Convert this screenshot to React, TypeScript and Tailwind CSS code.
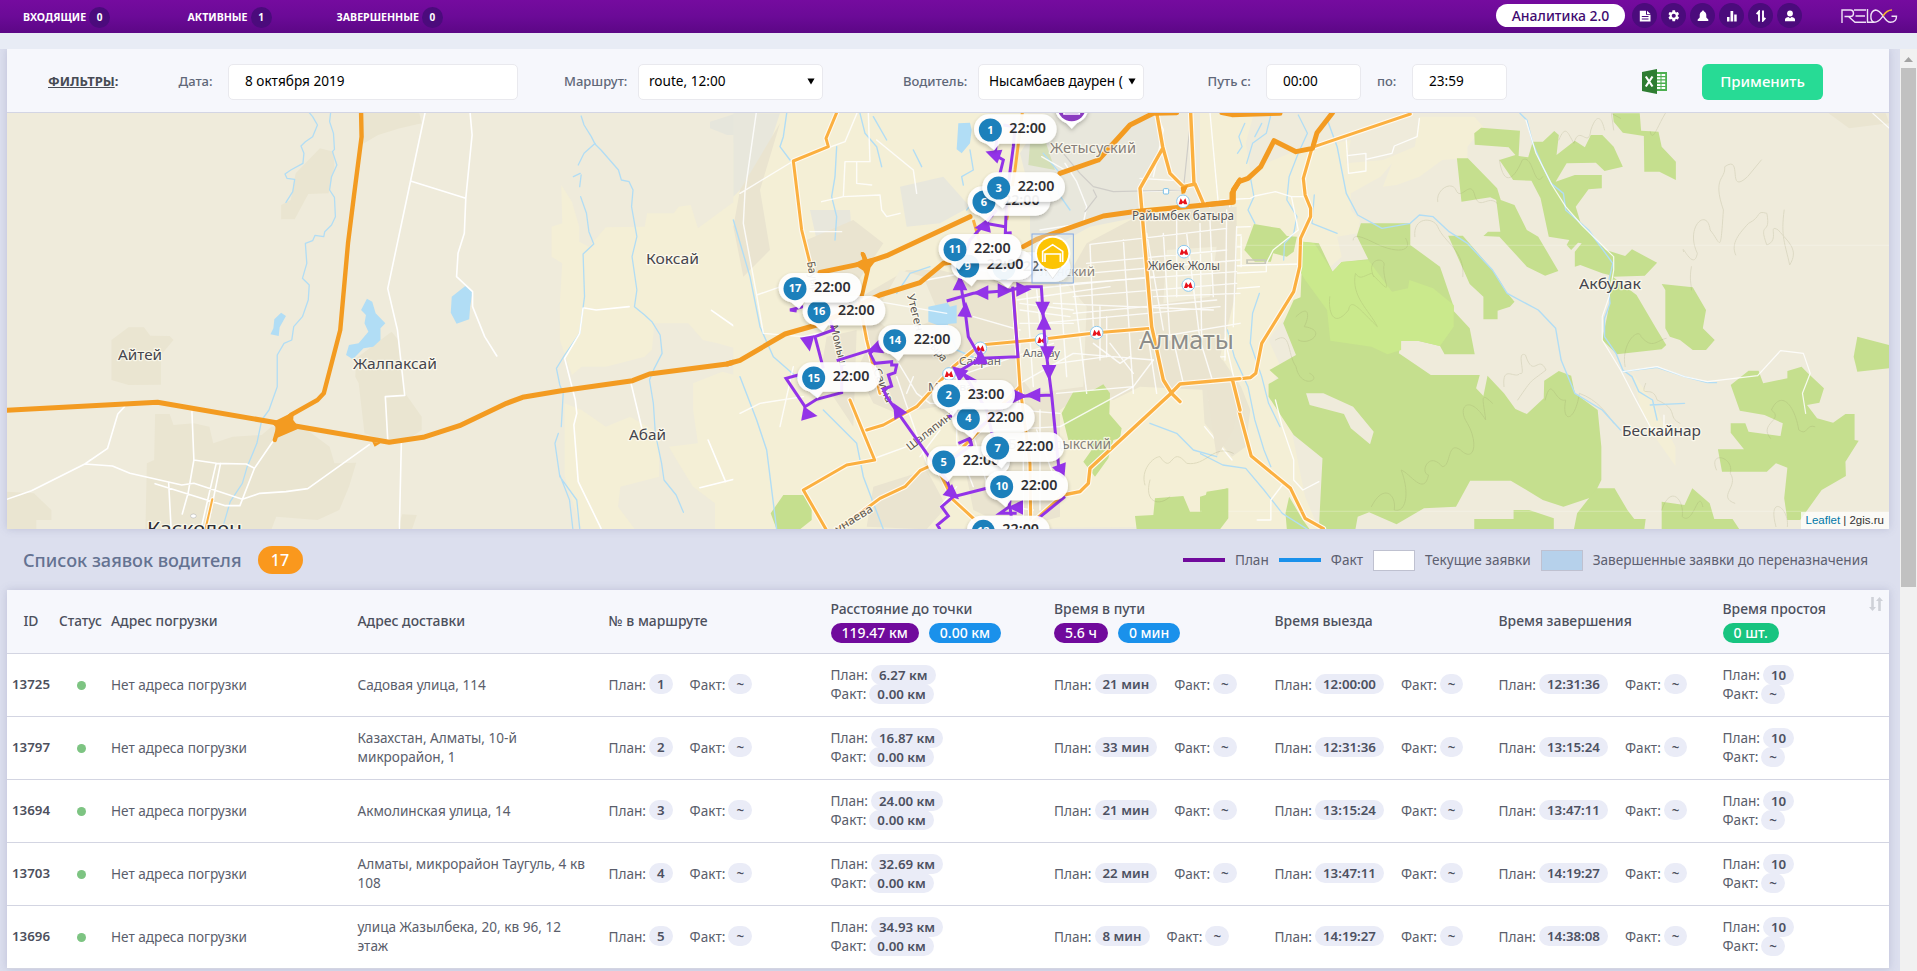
import React from 'react';
import { MdSettings } from 'react-icons/md';

const ORANGE = '#f39b21';
const ORANGE2 = '#fbb040';
const WATER = '#b1ddf5';
const GREEN = '#c5df8e';
const PURPLE = '#9333e8';

type LineProps = { d: string; w?: number; c?: string; o?: number };

/* Stroke whose width stays in screen pixels inside scaled groups. */
function Line({ d, w = 1, c = '#fff', o = 1 }: LineProps) {
  return (
    <path d={d} fill="none" stroke={c} strokeWidth={w} opacity={o} strokeLinejoin="round" strokeLinecap="round" vectorEffect="non-scaling-stroke" />
  );
}

function Road({ d, w = 2.4, c = ORANGE2 }: LineProps) {
  return (
    <>
      <Line d={d} w={w + 2.2} c="#fffaf0" />
      <Line d={d} w={w} c={c} />
    </>
  );
}

type LabelProps = { x: number; y: number; w?: number; size: number; color?: string; rotate?: number; children: string };

function Label({ x, y, w, size, color = '#45454d', rotate = 0, children }: LabelProps) {
  return (
    <text
      x={x}
      y={y}
      fontSize={size}
      fill={color}
      textLength={w}
      lengthAdjust="spacingAndGlyphs"
      stroke="#fffdf2"
      strokeOpacity={0.75}
      strokeWidth={2.4}
      strokeLinejoin="round"
      paintOrder="stroke"
      transform={rotate ? `rotate(${rotate} ${x} ${y})` : undefined}
    >
      {children}
    </text>
  );
}

const westRivers = [
  'M638 8L645 20L655 45L645 80L630 95L621 108L627 130L625 160L600 180L588 192L592 205L608 208L604 245L590 277',
  'M682 10L680 35L688 70L690 118L686 125L695 165L684 200L680 240L690 262L692 320L684 345L670 365L668 380L650 376L645 392L630 400L633 460L624 505L638 525L636 570L624 620L606 650L602 690L586 700L572 735L572 830L555 900L540 930L530 1000L510 1070L500 1120L475 1175L460 1250',
  'M1199 18L1205 45L1220 80L1228 103L1240 120L1258 150L1276 180L1282 210L1298 215L1306 240L1303 290L1314 380L1304 440L1314 540L1309 590L1330 615L1345 635L1362 675L1366 730L1350 775L1340 810L1348 880L1352 970L1365 1060L1370 1110L1395 1155L1410 1207',
  'M1228 100L1205 130L1193 165M1197 190L1183 200M1199 195L1196 230M1198 260L1210 310L1215 365L1225 402L1203 432L1206 560L1196 670L1165 735L1148 775L1155 825L1162 850L1158 950M1152 970L1145 1000L1155 1100L1190 1170L1196 1255M1155 1095L1175 1170L1182 1258',
  'M1525 165L1518 240L1522 270M1536 325L1550 400L1562 470L1564 620M1540 740L1562 810L1530 855L1545 930L1550 1015M1556 1020L1560 1070L1568 1090',
];

const westRoads = [
  'M877 8L847 213L800 536L820 660L835 856L795 860L800 990M970 10L974 75L961 265L958 370L945 430L942 500L975 545L975 590L1000 680L1025 738M847 213L961 265',
  'M14 1168L65 1142L175 1062L232 1068L268 1090L375 1125L400 1120L500 1168L536 1150L590 1145L635 1136L762 1004M175 1062L222 1015L243 912L257 890M186 1050L176 1062M320 1121L465 1187L495 1187L525 1075L508 1062L446 1060L400 1050L396 905M565 990L525 1075M446 1060L415 1255M455 1060L428 1255M400 1050L388 1150L376 1212M348 1120L353 1255M828 1000L824 1255',
  'M1206 594L1230 600L1298 590M1203 594L1196 670L1165 745L1187 870L1190 910L1184 945L1193 1115L1240 1255M1302 820L1325 960M1468 601L1514 648M1461 990L1497 1115M1444 1133L1531 1102M1528 62L1527 160L1538 260L1552 370L1558 550L1580 550M1538 250L1568 220M1522 765L1568 885M1530 745L1568 690',
];

const centerStreets = [
  'M0 250L165 150L315 95M50 0L15 245L10 340L50 555L70 670L190 680L280 660M50 555L165 515L220 500M315 95L355 0M315 155L390 155L385 10M315 155L310 260L245 275M350 155L350 220L395 225M310 260L420 255L425 300L440 320L480 310M410 90L520 180L530 250M210 365L305 365',
  'M0 910L60 880L190 860M390 1050L500 1010L560 980M470 750L500 800L530 850L570 880L600 880M520 800L500 850M470 800L560 1060M160 770L120 950M330 560L620 610M590 820L940 700M650 760L650 1000L700 1130M830 570L1110 530M600 1190L650 1130M850 850L850 1250M900 900L900 1200M760 960L960 950L1180 830L1240 750',
  'M1050 403L1460 355M1050 403L1060 650M1040 460L1460 420M1040 490L1500 450M1000 520L1490 485M1000 560L1490 520M940 580L1420 600M1000 610L1430 570M900 640L1440 590M1150 390L1180 850M1220 370L1270 660M1270 370L1290 690M1310 300L1310 560M1340 370L1380 690M1380 340L1385 690M1410 330L1420 560M1460 300L1455 750M1490 350L1480 650M1240 560L1500 550M1200 690L1500 640M1100 620L1100 740M1080 590L1080 750',
  'M840 580L1000 600M840 600L990 620M840 640L1000 640M860 540L880 830M890 540L900 640M960 520L980 800M1000 520L1040 850M950 850L1180 830M840 820L1000 730L1240 750M1060 700L1140 760L1170 740M1110 700L1180 790M950 760L1100 740M840 700L830 900L960 910M1250 10L1270 60L1240 200M1200 205L1310 212M1210 245L1340 240',
  'M975 160L1010 215L1040 290L1030 340L900 360M905 140L975 180M540 1040L600 960M680 900L740 1120M740 1120L800 1190L880 1200M560 510L720 480L830 500M840 540L1240 500M700 620L840 660M890 960L960 1150M1220 650L1250 850M1300 690L1330 820M1380 690L1420 820',
];

const hills = [
  'M520 275C515 240 550 210 560 240C570 275 590 210 600 250C610 310 630 250 650 280',
  'M655 150C665 240 690 200 705 150C730 130 730 240 750 200M785 90C800 40 805 70 818 100C830 40 850 120 855 60C870 0 880 30 885 60M905 60L900 10L920 25M1018 10C1000 50 990 100 985 65',
  'M335 390C335 360 380 400 400 410C440 430 465 420 450 385M380 500C360 440 410 440 402 470C400 520 430 570 375 490C355 500 350 510 340 490C330 560 370 600 388 650C350 600 330 560 325 600C290 660 280 600 284 560M470 380C465 320 510 320 520 350C535 400 580 420 575 500',
  'M1058 425C1050 390 1080 490 1088 430C1060 350 1110 290 1116 360C1140 400 1138 440 1145 300C1120 200 1150 210 1148 170C1190 130 1150 260 1198 200L1228 150M1172 435C1160 400 1180 370 1200 340C1230 320 1215 300 1240 310C1250 380 1220 330 1240 405C1270 390 1240 340 1265 360C1290 400 1310 420 1290 465C1280 400 1270 380 1278 300',
  'M665 830C660 760 690 810 700 790C715 800 690 720 712 735C730 810 740 730 757 780C720 820 730 800 695 870M640 880C610 840 620 870 625 930C590 850 560 890 585 940C610 1000 600 1060 570 1020C540 990 550 1070 530 1070C500 1020 480 1090 500 1095C490 1160 460 1090 440 1080C460 1150 450 1210 425 1200C430 1150 400 1120 375 1190',
  'M165 690C200 660 190 730 210 770C220 840 270 810 240 790M210 620C240 580 240 620 228 650C280 660 240 710 215 690M930 770C920 700 960 650 965 680C990 720 1000 690 1020 685M1075 470C1070 510 1075 520 1075 540',
  'M755 870C770 790 775 880 800 870C790 940 820 940 830 850C870 870 890 910 905 940M975 820C960 870 990 820 1000 870C1050 900 1020 920 1050 940M1130 1080C1110 1020 1170 1040 1160 1090C1180 1130 1130 1160 1170 1180M1248 985C1220 940 1280 930 1250 900C1270 840 1300 880 1310 960C1330 980 1325 940 1345 950M1010 1200C1030 1120 1060 1170 1055 1220C1080 1250 1090 1130 1100 1190M1260 1250C1240 1150 1290 1190 1285 1250',
];

const greens = [
  'M615 53L700 62L697 138L718 142L728 95L750 95L775 63L785 75L780 135L820 92L842 112L855 75L880 75L905 110L925 170L885 183L866 158L802 160L778 215L820 195L879 195L879 235L850 238L822 290L832 335L888 420L930 438L945 418L1000 458L973 497L903 500L955 555L1000 660L1020 705L1010 718L912 733L880 690L897 575L895 495L880 490L832 465L820 470L820 425L835 400L827 398L812 420L802 405L808 390L763 380L745 265L725 212L685 210L655 150L690 135L675 112L601 104L600 70Z',
  'M903 10L962 10L965 62L1003 65L1010 110L1041 155L1041 210L1005 185L972 185L971 78L925 68L905 35Z',
  'M562 145L586 145L650 235L658 270L688 285L715 360L740 380L784 483L755 497L715 470L655 380L620 378L630 365L657 365L648 270L635 262L572 275Z',
  'M543 377L575 377L640 480L655 510L670 545L688 575L678 590L651 602L651 628L620 628L620 560L590 522Z',
  'M1010 522L1078 532L1107 600L1100 655L1126 690L1107 720L1078 720L1050 690L1028 680L1018 655L1018 540Z',
  'M118 342L175 355L190 378L212 380L205 425L190 440L160 430L155 455L120 455L97 420Z',
  'M352 340L460 340L460 405L525 470L530 490L555 590L555 603L590 655L601 733L535 733L525 708L478 693L440 693L435 730L505 795L612 795L604 835L620 858L629 797L665 850L690 897L715 912L752 865L753 812L785 783L812 797L820 850L870 900L878 1010L878 1110L860 1160L795 1190L750 1170L680 1112L591 1112L560 1190L490 1195L430 1243L370 1207L345 1220L340 1258L260 1258L268 1045L205 975L150 860L150 822L172 805L152 780L210 735L182 640L205 570L220 562L225 395L260 400L290 485L310 456L368 448L343 378Z',
  'M868 1135L907 1135L935 1200L950 1227L975 1227L972 1258L818 1258L825 1210ZM600 1227L686 1227L686 1200L720 1200L774 1225L774 1258L600 1258ZM1010 1175L1060 1185L1077 1135L1115 1180L1125 1227L1165 1227L1180 1258L1010 1258Z',
  'M1200 782L1222 782L1232 820L1285 805L1285 783L1316 770L1330 790L1365 835L1355 878L1328 885L1350 925L1385 938L1412 912L1432 912L1432 990L1441 992L1412 1055L1413 1098L1360 1140L1313 1230L1285 1230L1278 1165L1285 1073L1260 1060L1240 1085L1142 1085L1133 1018L1190 1018L1161 968L1161 940L1193 940L1200 965L1270 978L1275 940L1235 915L1181 902L1161 825Z',
  'M1438 680L1508 705L1508 775L1438 785L1430 740Z',
  'M195 1160L225 1230L240 1258L190 1258L187 1210ZM0 1160L60 1135L60 1200L30 1235L30 1258L0 1258Z',
];

const markers: [number, number, string, string][] = [
  [792, 474, '8', '22:00'],
  [683, 468, '9', '22:00'],
  [732, 276, '6', '22:00'],
  [751, 60, '1', '22:00'],
  [776, 234, '3', '22:00'],
  [645, 419, '11', '22:00'],
  [237, 605, '16', '22:00'],
  [165, 536, '17', '22:00'],
  [464, 692, '14', '22:00'],
  [221, 804, '15', '22:00'],
  [685, 926, '4', '22:00'],
  [626, 857, '2', '23:00'],
  [611, 1056, '5', '22:00'],
  [773, 1014, '7', '22:00'],
  [730, 1264, '12', '22:00'],
  [785, 1130, '10', '22:00'],
];

const arrows: [number, number, number][] = [
  [760, 133, 200], [728, 350, 170], [660, 520, -90], [676, 600, -85], [724, 548, 180], [794, 542, 0], [850, 538, 0],
  [908, 596, 90], [912, 638, -90], [922, 730, 90], [927, 786, 90], [880, 855, 180], [838, 858, 0], [722, 742, -90],
  [655, 785, 220], [205, 700, 80], [405, 716, 160], [472, 900, -120], [208, 914, 10], [638, 1152, 40], [828, 1192, 180], [964, 1084, 70],
];

const metro: [number, number][] = [[1329, 274], [1332, 425], [1345, 525], [1070, 668], [905, 690], [721, 715], [627, 792]];

function CityMap() {
  return (
    <svg className="block h-[416px] w-full" viewBox="7 113 1882 416" preserveAspectRatio="none" fontFamily="'Noto Sans', 'Open Sans', sans-serif">
      <defs>
        <filter id="pinShadow" x="-20%" y="-20%" width="140%" height="160%">
          <feDropShadow dx="0" dy="6" stdDeviation="6" floodColor="#000" floodOpacity="0.25" />
        </filter>
      </defs>
      <rect x="0" y="100" width="1917" height="440" fill="#efebdb" />

      {/* West: fields, settlements, lakes */}
      <g transform="translate(0 110) scale(.48469 .33333)">
        <path fill="#eae5d1" d="M750 0L865 10L870 40L825 55L780 75L745 105ZM660 115L688 125L690 170L678 250L636 252L608 328L580 328L580 285L600 270L610 190ZM265 652L297 652L310 677L350 678L358 690L332 735L332 824L265 825L230 810L230 690ZM320 912L350 912L358 945L400 940L432 950L440 1000L480 980L540 975L560 950L620 945L680 1010L690 1060L735 1058L720 1130L700 1200L655 1230L570 1220L560 1258L300 1258L303 1060L318 1050ZM14 1145L70 1150L106 1200L106 1230L75 1230L75 1258L14 1258ZM808 665L822 690L836 850L870 920L870 960L845 985L790 990L752 970L740 820L733 800L735 745ZM830 1213L860 1215L850 1258L820 1258Z" />
        <path fill="#f4efd6" d="M1158 225L1180 275L1195 350L1195 395L1215 410L1250 352L1330 350L1335 310L1390 310L1400 290L1425 285L1440 355L1510 280L1535 275L1568 290L1568 700L1530 720L1480 700L1450 690L1420 640L1350 640L1345 720L1330 740L1250 770L1200 770L1180 795L1155 690L1155 580L1160 460L1138 440L1138 350L1160 340ZM1200 900L1250 950L1300 920L1360 970L1360 1100L1280 1130L1275 1190L1310 1258L1200 1258L1165 1100L1165 880ZM1490 785L1530 800L1568 870L1568 1258L1475 1258L1475 1180L1430 1130L1400 1060L1380 1010L1440 1000L1430 900L1430 820Z" />
        <path fill="#e6e6dc" d="M1465 35L1520 10L1568 10L1568 75L1500 75L1465 55Z" />
        <path fill={WATER} d="M757 566L768 575L775 610L795 640L785 655L785 690L770 710L750 715L728 748L714 735L720 705L740 700L760 665L752 640L755 615L745 600ZM960 528L975 545L970 590L968 628L942 641L930 608L932 560ZM580 608L590 618L577 652L575 678L558 673L564 655L566 628Z" />
        {westRivers.map((d) => <Line key={d} d={d} w={1.3} c={WATER} />)}
        {westRoads.map((d) => <Line key={d} d={d} w={1.6} />)}
        <Line d="M14 901L325 877L570 938L803 997L873 982L948 947L1045 880L1078 862L1155 843L1305 812L1340 792L1500 762L1530 750L1575 710" w={5} c={ORANGE} />
        <Line d="M745 8L746 80L730 260L718 400L702 660L668 850L655 870L600 915L575 950L567 990" w={4.4} c={ORANGE} />
        <path fill={ORANGE} d="M560 938L606 905L605 930L618 955L570 985L568 950ZM768 995L785 1000L773 1010Z" />
        <Road d="M438 1168L424 1256" w={2} />
        <circle cx="399" cy="1218" r="6" fill="#fff" stroke="#999" />
      </g>

      {/* East: forests and foothills */}
      <g transform="translate(1200 110) scale(.45711 .33333)">
        <path fill="#f4efd6" d="M0 0L120 0L100 100L110 180L230 110L270 105L330 90L320 160L400 150L470 110L480 20L600 20L620 50L585 110L585 145L530 150L480 200L430 225L400 230L420 160L395 200L330 250L330 300L350 330L345 370L300 380L310 440L285 470L230 440L220 560L150 690L180 780L150 830L200 960L230 1160L260 1258L0 1258ZM945 790L990 870L1010 930L1040 1010L1040 1068L1000 990L965 900Z" />
        <path fill="#eae5d1" d="M0 280L70 280L70 560L40 600L0 600ZM0 730L50 750L90 830L110 900L100 1010L70 1040L10 940ZM1375 10L1500 10L1508 40L1420 55Z" />
        {greens.map((d) => <path key={d} d={d} fill={GREEN} />)}
        <path fill="#cae98c" d="M225 395L250 400L290 485L310 456L368 450L420 545L455 535L458 510L510 535L555 585L555 650L525 708L480 693L440 693L440 720L410 733L375 710L285 692L278 600L230 510L215 475Z" />
        <path fill="#efebdb" d="M232 850L270 850L335 890L380 965L372 1003L330 955L315 912L240 885Z" />
        {hills.map((d) => <Line key={d} d={d} w={1} c="#8a8a5c" o={0.18} />)}
        <Line d="M700 10L715 30L728 100L750 170L768 220L795 250L800 300L850 360L903 460L893 520L897 580L885 625L885 680L910 730L925 780L945 800L960 845L990 870L1000 930M985 885L1060 880M925 785L1000 772L1060 800L1110 818L1130 818M280 35L300 110L320 250L345 315L398 355L460 340L480 315L510 320L545 365L585 400L640 480L672 550L740 600L778 655L790 750L820 850L880 900L920 960" w={1.4} c={WATER} />
        <Line d="M98 40L85 80L92 110L82 130M135 40L120 80M155 15L145 70L115 100L102 160M215 15L235 70L215 130L195 200L190 270L212 320L205 370L185 400L183 450M250 255L245 340L300 370M110 200L118 260L105 300L120 340M130 550L115 610L110 700L135 800L150 880L175 950M60 660L75 740L105 830L120 930L140 1020L155 1070M0 1030L50 1065L100 1075L140 1140L180 1210L235 1258" w={1.3} c={WATER} />
        <Line d="M713 30L735 130L770 225L800 290L835 345L905 440L905 480L895 560L880 620L880 690L920 780L950 860L985 950L1010 970M925 785L1000 770L1060 800L1110 815L1220 797L1270 722L1320 730L1335 790L1318 850L1325 910M1015 915L1015 970M1472 10L1508 55" w={1.2} o={0.85} />
        <Line d="M320 90L325 190L363 183L363 130L322 137M363 148L420 130L425 108L475 80L480 25M22 10L40 280M65 280L65 510M45 270L110 265L120 258L165 245L200 260L225 260M165 245L200 260L215 360L160 420L145 460L145 485L0 495M0 355L110 350M0 470L220 462M0 380L90 375M0 420L90 410M0 545L130 530M0 590L60 580M0 635L45 635M0 745L55 740M20 280L50 660L75 810L20 870M90 380L90 470M40 400L40 540M10 950L70 1050M165 870L180 950L205 1050L205 1110L225 1140L260 1115M0 690L60 830M180 1125L155 1170L155 1230L125 1230" w={1.3} o={0.9} />
        <Road d="M250 110L460 12" w={3} />
        <Road d="M246 110L226 205L230 255L242 295L242 320L220 385L218 470L205 545L135 700L122 790L110 803L-10 821M68 815L112 1038L198 1135L230 1225L270 1256" w={3.2} />
        <Line d="M0 286L70 275L70 250L85 215L105 205L133 170L162 92L210 125L246 115L256 68L290 8M48 8L70 14L175 10" w={5} c={ORANGE} />
        <path d="M103 450h40v10h-40z" fill="none" stroke="#c8c8ba" strokeWidth="4" />
        <Line d="M0 406H1508M0 1204H1508" w={1} c="#fff" o={0.25} />
      </g>

      {/* City */}
      <g transform="translate(740 110) scale(.33333)">
        <path fill="#f4efd6" d="M-20 100L60 0L860 0L1000 300L1380 280L1380 1250L-20 1258Z" />
        <path fill="#e8e7dc" d="M-20 10L120 10L90 100L20 220L-20 260ZM210 300L330 300L335 370L230 390ZM480 230L610 200L690 290L600 340L500 350ZM920 0L1240 0L1270 110L1190 240L1200 320L1050 350L960 400L870 380L870 250L840 130Z" />
        <path fill="#eae4d0" d="M1040 400L1210 310L1490 290L1490 540L1440 740L1500 850L1480 960L1430 1040L1400 840L1200 830L1120 870L1030 850L960 900L960 1220L820 1258L700 1200L650 950L590 890L470 910L400 880L350 780L390 700L330 580L500 480L600 480L830 540L960 540ZM200 390L340 330L430 400L350 520L220 500ZM260 680L350 660L340 950L240 800ZM120 40L60 240L90 420L10 500L-20 350L0 240ZM400 1130L560 1080L620 1190L560 1258L380 1250ZM1260 320L1380 280L1470 320L1440 620L1240 640Z" />
        <path fill="#f1edda" d="M820 540L980 520L1040 590L1030 830L880 850L840 800ZM1280 420L1430 410L1410 560L1270 580ZM480 480L550 500L600 620L470 680L400 620Z" />
        <path fill="#d5dfb8" d="M870 100L915 90L945 180L865 165Z" />
        <path fill={GREEN} d="M1090 823L1110 850L1108 912L1145 955L1140 985L1120 990L1105 1045L1065 1100L1030 1055L1055 1020L1055 990L985 990L965 910L1000 845L1060 840ZM130 1155L190 1155L215 1180L215 1230L180 1258L110 1258L92 1210ZM1185 1218L1240 1215L1245 1165L1330 1158L1350 1205L1385 1205L1400 1145L1465 1135L1465 1225L1440 1258L1190 1258Z" />
        <path fill={WATER} d="M655 40L690 38L695 60L690 100L665 130L650 118ZM565 590L622 578L630 590L650 585L650 640L620 642L618 655L565 635Z" />
        <Line d="M-20 330L30 500L60 650L100 740L180 810L230 860M140 10L130 80L120 110L150 150M290 110L285 200L275 260L290 320L285 390M360 10L375 70L410 110L425 170M400 20L440 90M520 120L545 170M690 120L700 180L665 200L670 225M720 250L680 300M570 470L510 490L470 550M620 640L650 720L720 750M910 130L960 190L955 250L990 300M0 800L50 930L80 1020L110 1258M250 900L350 1000L370 1100L430 1258M1230 940L1310 970L1360 1020L1430 1040" w={1.4} c={WATER} />
        {centerStreets.map((d) => <Line key={d} d={d} w={1.4} o={0.85} />)}
        <Line d="M970 130L1020 190L1060 230L1120 245L1330 240L1355 0M1060 240L1070 260L1035 305" w={1.2} c="#cfcdc8" />
        <Line d="M1215 1125C1200 1080 1240 1040 1260 1040C1300 1100 1290 1000 1340 1060C1400 1070 1420 1000 1480 1030M1230 1110C1210 1180 1260 1190 1290 1160" w={1} c="#8a8a5c" o={0.2} />
        <Road d="M290 8L258 85L265 110L160 153L185 360L215 480" w={3} />
        <Road d="M355 560L380 690L420 850M330 870L404 1050L320 1065L190 1140L258 1258M380 960L430 945L530 890L640 770L720 705L905 688L1070 668L1235 655M820 540L840 830L870 1060L872 1230M840 830L790 880L720 960L650 1030L540 1082L495 1130L420 1165L330 1232L290 1258M600 1090L640 1170L700 1225L730 1258" w={3} />
        <Road d="M1250 8L1268 110L1290 190L1330 230L1365 222L1390 280M1352 8L1362 222M1268 115L1200 235L1235 650L1270 810L1295 850L1320 875M1500 806L1320 822L1295 848L1050 1075L1045 1120L1020 1145L970 1155L880 1235M1478 812L1500 900" w={3.4} />
        <Line d="M-39 762L0 751L135 672L240 642L420 555L540 518L610 460L640 455M850 410L890 388L1090 318L1180 305L1480 277L1480 240L1500 210" w={5} c={ORANGE} />
        <Line d="M240 487L370 460L440 437L690 320M960 190L1075 150L1170 45L1240 10L1310 8" w={5} c={ORANGE} />
        <Line d="M368 432L385 475L365 560" w={4} c={ORANGE} />
        <path fill={ORANGE} d="M340 462L368 448L362 425L375 430L382 447L415 442L390 475L378 500L370 482ZM1322 232L1345 225L1335 250L1325 252Z" />
        <path d="M848 0L825 180L800 330M700 330L720 400" fill="none" stroke={ORANGE2} strokeWidth="9" />
      </g>

      {/* Place names */}
      <Label x={118} y={360} w={44} size={15}>Айтей</Label>
      <Label x={353} y={369} w={84} size={15}>Жалпаксай</Label>
      <Label x={646} y={264} w={53} size={15}>Коксай</Label>
      <Label x={629} y={440} w={37} size={15}>Абай</Label>
      <Label x={147} y={535} w={95} size={18} color="#2e2e34">Каскелен</Label>
      <Label x={1579} y={289} w={62} size={15}>Акбулак</Label>
      <Label x={1622} y={436} w={79} size={15}>Бескайнар</Label>
      <Label x={1050} y={153} w={86} size={14} color="#87807a">Жетысуский</Label>
      <Label x={1132} y={220} w={102} size={12.5} color="#55555a">Райымбек батыра</Label>
      <Label x={1148} y={270} w={72} size={12.5} color="#55555a">Жибек Жолы</Label>
      <Label x={1139} y={349} w={95} size={25} color="#8d8d8a">Алматы</Label>
      <Label x={1040} y={276} w={55} size={13} color="#87807a">линский</Label>
      <Label x={1008} y={449} w={103} size={13.5} color="#87807a">Бостандыкский</Label>
      <Label x={1023} y={357} w={37} size={11.5} color="#66666a">Алатау</Label>
      <Label x={959} y={365} w={42} size={11.5} color="#66666a">Сайран</Label>
      <Label x={928} y={391} w={45} size={11.5} color="#66666a">Москва</Label>
      <Label x={910} y={451} size={11} w={59} rotate={-38} color="#5c5650">Шаляпина</Label>
      <Label x={838} y={533} size={11} w={42} rotate={-32} color="#5c5650">унаева</Label>
      <Label x={907} y={295} size={11} w={38} rotate={76} color="#5c5650">Утеген</Label>
      <Label x={927} y={344} size={11} w={24} rotate={50} color="#5c5650">тыра</Label>
      <Label x={807} y={262} size={11} w={32} rotate={80} color="#5c5650">Бауыр</Label>
      <Label x={830} y={326} size={11} w={43} rotate={76} color="#5c5650">Момыш</Label>
      <Label x={873} y={370} size={11} w={36} rotate={68} color="#5c5650">Саина</Label>

      {/* Route, metro stations and delivery pins */}
      <g transform="translate(740 110) scale(.33333)">
        {metro.map(([x, y]) => (
          <g key={`${x}-${y}`}>
            <circle cx={x} cy={y} r="19" fill="#fff" stroke="#8cc8ee" strokeWidth="3" />
            <path d={`M${x - 13} ${y + 9}L${x - 7} ${y - 9}L${x} ${y + 1}L${x + 7} ${y - 9}L${x + 13} ${y + 9}H${x + 4}L${x} ${y + 4}L${x - 4} ${y + 9}Z`} fill="#e8121c" />
          </g>
        ))}
        <rect x="1270" y="236" width="16" height="16" rx="3" fill="#fff" stroke="#77bfe8" strokeWidth="3" />
        <g fill="none" stroke={PURPLE} strokeWidth="9" strokeLinejoin="miter">
          <path d="M790 45L825 50L820 110L800 260L796 370L815 368M770 90L765 135L790 150L780 190M770 300L735 340L795 350M735 340L690 390L665 460L660 510L675 600L685 680L722 745L834 740L818 530M620 573L700 550L800 542L860 530L904 530L915 700L935 855L957 1080L975 1080M935 855L825 860M722 745L655 785L710 815M670 790L690 820L740 900L770 1030M170 603L150 600L190 590M270 630L280 660L225 680L250 775M290 752L405 716L390 730L405 760L455 755L455 765L470 765L465 788L445 795L455 828L430 838L440 860L475 910L560 1030L620 1110L640 1160L740 1135M640 1160L605 1190L625 1218L592 1245L600 1258M175 795L138 805L195 890L230 868L305 848L305 765M655 1000L690 985L695 1005L620 1060M810 1170L808 1190L780 1210L830 1210M810 1190L815 1230M895 1225L975 1160M830 860L790 890L700 970M685 985L695 1005M625 920L645 915" />
        </g>
        {arrows.map(([x, y, a]) => (
          <path key={`${x}-${y}`} d="M-21 -22L25 0L-21 22Z" fill={PURPLE} transform={`translate(${x} ${y}) rotate(${a})`} />
        ))}
        <g filter="url(#pinShadow)">
          <circle cx="995" cy="-8" r="50" fill="#fff" />
          <path d="M975 35L995 56L1015 35Z" fill="#fff" />
        </g>
        <circle cx="995" cy="-8" r="42" fill="#8a3bc0" />
        <path d="M972 4V12H1018V4" stroke="#fff" strokeWidth="5" fill="none" />
        {markers.map(([x, y, n, t]) => (
          <g key={n}>
            <g filter="url(#pinShadow)" fill="#fff" opacity="0.93">
              <path d={`M${x - 5} ${y - 47}H${x + 155}A44 44 0 0 1 ${x + 155} ${y + 41}H${x + 27}L${x + 12} ${y + 61}L${x - 12} ${y + 41}C${x - 35} ${y + 36} ${x - 49} ${y + 20} ${x - 49} ${y - 3}A44 44 0 0 1 ${x - 5} ${y - 47}Z`} />
            </g>
            <circle cx={x} cy={y} r="34.5" fill="#1c80bb" />
            <text x={x} y={y + 11} fontSize="33" fontWeight="700" fill="#fff" textAnchor="middle">{n}</text>
            <text x={x + 57} y={y + 9} fontSize="41" fontWeight="600" fill="#303034" textLength="110" lengthAdjust="spacingAndGlyphs">{t}</text>
          </g>
        ))}
        <rect x="876" y="372" width="124" height="147" fill="#dcecfb" fillOpacity="0.3" stroke="#86ace4" strokeWidth="3" />
        <circle cx="938" cy="430" r="53" fill="#fff" />
        <path d="M913 472L938 506L963 472Z" fill="#fff" stroke="#dddddd" strokeWidth="2" />
        <circle cx="938" cy="430" r="47" fill="#fcc404" />
        <path d="M908 456V424L938 404L968 424V456M915 456V432H961V456" fill="none" stroke="#fff" strokeWidth="5" />
      </g>
    </svg>
  );
}

function Tab({ label, count, className }: { label: string; count: number; className: string }) {
  return (
    <div className={`flex items-center gap-[3px] ${className}`}>
      <span className="text-[10.6px] font-bold text-white">{label}</span>
      <span className="flex size-[21px] items-center justify-center rounded-full bg-[#4b0b7c] text-[10px] font-bold text-white">{count}</span>
    </div>
  );
}

function IconButton({ children }: { children: React.ReactNode }) {
  return <span className="flex size-[25px] items-center justify-center rounded-full bg-[#4b0b7c] text-white">{children}</span>;
}

function Header() {
  return (
    <header className="flex h-[33px] shrink-0 items-start bg-linear-to-b from-[#750b9f] via-[#6b0a97] to-[#5c0786]">
      <div className="flex h-[28px] pl-[23px] pt-[7px]">
        <Tab label="ВХОДЯЩИЕ" count={0} className="w-[164.500px] shrink-0" />
        <Tab label="АКТИВНЫЕ" count={1} className="w-[149px] shrink-0" />
        <Tab label="ЗАВЕРШЕННЫЕ" count={0} className="shrink-0" />
      </div>
      <div className="ml-auto flex items-start pr-[19px] pt-[3px]">
        <div className="mr-[7px] mt-px flex h-[23px] w-[129px] items-center justify-center rounded-full bg-white text-[14px] font-medium text-[#3f0a70]">Аналитика 2.0</div>
        <div className="flex gap-1">
          <IconButton>
            <svg className="size-3" viewBox="0 0 12 12"><path d="M.8.8h6.200v4h4.500v6.700H.8zM8 .8l3.500 3.300H8z" fill="currentColor" /><path d="M2.800 6.500h6.700M2.800 9h6.700" stroke="#4b0b7c" strokeWidth="1" /></svg>
          </IconButton>
          <IconButton><MdSettings size={13.5} /></IconButton>
          <IconButton>
            <svg className="size-3" viewBox="0 0 12 12"><path d="M6 .5c.6 0 1 .5 1 1C8.500 2 9.300 3.500 9.300 5v2.500l2 2v1.500H.7V9.500l2-2V5C2.700 3.500 3.500 2 5 1.500c0-.5.4-1 1-1z" fill="currentColor" /></svg>
          </IconButton>
          <IconButton>
            <svg className="size-3" viewBox="0 0 12 12"><path d="M1 7h2.500v4.500H1zM4.500 1h2.700v10.500H4.500zM8.200 4.500h2.500v7H8.200z" fill="currentColor" /></svg>
          </IconButton>
          <IconButton>
            <svg className="size-3" viewBox="0 0 12 12"><path d="M4 11.500V1.500L1.700 4.200M8 .5v10l2.300-2.700" fill="none" stroke="currentColor" strokeWidth="1.900" /></svg>
          </IconButton>
          <IconButton>
            <svg className="size-3" viewBox="0 0 12 12"><circle cx="6" cy="3.500" r="2.900" fill="currentColor" /><path d="M1 11.300V9.200C1 8 3 7.200 4.500 7l1.500 1.200L7.500 7c1.500.2 3.500 1 3.500 2.200v2.100z" fill="currentColor" /></svg>
          </IconButton>
        </div>
        <svg className="ml-[39px] mt-1.5 h-[15px] w-[57px]" viewBox="0 0 57 15" fill="none" stroke="#efe2f5" strokeWidth="1.400">
          <path d="M1 14V1h8.500c4 0 4 6.500 0 6.500H3.500M7.500 7.500L14 13.300H25M13 1h12M14.500 7h9.500M26.500 0v13.300h6.500M33.500 13.300c-5-1-5-11 1-12.300 7 0 8.500 12.300 15 12.300 4 0 6-2.500 6-6h-5M33.500 13.300c4 0 6-3 8.500-6.300" />
          <path d="M42 7c2.500-4 5-6 9-6" stroke="#f2b632" strokeWidth="1.600" />
        </svg>
      </div>
    </header>
  );
}

function Field({ className, children, arrow }: { className: string; children: React.ReactNode; arrow?: boolean }) {
  return (
    <div className={`flex h-9 shrink-0 items-center rounded-[5px] border border-[#e9e9ee] bg-white text-[13.6px] font-normal text-black ${className}`}>
      <span className="whitespace-nowrap">{children}</span>
      {arrow && <svg className="ml-auto mr-[7px] h-[7px] w-[8px] shrink-0" viewBox="0 0 9 7"><path d="M.5 0h8L4.500 7z" /></svg>}
    </div>
  );
}

function Filters() {
  return (
    <div className="flex h-[64px] items-center border-b border-[#d3d5e4] bg-[#f6f7fc] pt-[2px] text-[13px] font-medium text-[#5f6778] whitespace-nowrap">
      <div className="w-[131px] shrink-0 pl-[41px] font-bold text-[#474b54]"><span className="underline">ФИЛЬТРЫ</span>:</div>
      <div className="w-[90px] shrink-0 pl-[40.500px]">Дата:</div>
      <Field className="w-[290px] pl-4">8 октября 2019</Field>
      <div className="w-[120px] shrink-0 pl-[46px]">Маршрут:</div>
      <Field className="w-[185px] pl-2.5" arrow>route, 12:00</Field>
      <div className="w-[155px] shrink-0 pl-[80px]">Водитель:</div>
      <Field className="w-[166px] pl-2.5" arrow>Нысамбаев даурен (</Field>
      <div className="w-[122px] shrink-0 pl-[63.500px]">Путь с:</div>
      <Field className="w-[95px] pl-4">00:00</Field>
      <div className="w-[51px] shrink-0 pl-4">по:</div>
      <Field className="w-[95px] pl-4">23:59</Field>
      <svg className="ml-[135px] h-[26px] w-[26px] shrink-0" viewBox="0 0 26 26">
        <path d="M13 3h12v19H13z" fill="#4caf50" />
        <path d="M15 6h3.500M15 9.300h3.500M15 12.600h3.500M15 15.900h3.500M15 19h3.500M19.500 6h3.700M19.500 9.300h3.700M19.500 12.600h3.700M19.500 15.900h3.700M19.500 19h3.700" stroke="#fff" strokeWidth="2" />
        <path d="M0 3L15 0v25L0 22z" fill="#2e7d32" />
        <path d="M3.800 7.500L10.500 17.500M10.500 7.500L3.800 17.500" stroke="#fff" strokeWidth="2.200" />
      </svg>
      <div className="ml-[34px] flex h-9 w-[121px] shrink-0 items-center justify-center rounded-md bg-[#27db95] text-[15px] font-medium text-white">Применить</div>
    </div>
  );
}

function Legend() {
  return (
    <div className="flex items-center gap-2.5 pr-[21px] text-[13.6px] text-[#5d6070]">
      <span className="h-1 w-[42px] bg-[#700a9c]" />
      <span>План</span>
      <span className="h-1 w-[42px] bg-[#1a91eb]" />
      <span>Факт</span>
      <span className="h-[21px] w-[42px] border border-[#bfc1d0] bg-white" />
      <span>Текущие заявки</span>
      <span className="h-[21px] w-[42px] border border-[#bfc1d0] bg-[#b6d1eb]" />
      <span>Завершенные заявки до переназначения</span>
    </div>
  );
}

function Pill({ children }: { children: React.ReactNode }) {
  return <span className="inline-block h-5 rounded-full bg-[#eaecf7] px-2 text-[13.3px] font-semibold leading-5 text-[#4d5161]">{children}</span>;
}

function PlanFact({ plan, fact, stacked }: { plan: string; fact: string; stacked?: boolean }) {
  return (
    <div className={stacked ? 'flex flex-col' : 'flex gap-[17px]'}>
      <div className="flex h-[19px] items-center gap-[3px]"><span>План:</span><Pill>{plan}</Pill></div>
      <div className="flex h-[19px] items-center gap-[3px]"><span>Факт:</span><Pill>{fact}</Pill></div>
    </div>
  );
}

function Total({ children, className }: { children: React.ReactNode; className: string }) {
  return <span className={`flex h-5 items-center rounded-full px-[11px] text-[14px] font-medium text-white ${className}`}>{children}</span>;
}

const rows = [
  ['13725', 'Садовая улица, 114', '1', '6.27 км', '21 мин', '12:00:00', '12:31:36'],
  ['13797', 'Казахстан, Алматы, 10-й микрорайон, 1', '2', '16.87 км', '33 мин', '12:31:36', '13:15:24'],
  ['13694', 'Акмолинская улица, 14', '3', '24.00 км', '21 мин', '13:15:24', '13:47:11'],
  ['13703', 'Алматы, микрорайон Таугуль, 4 кв 108', '4', '32.69 км', '22 мин', '13:47:11', '14:19:27'],
  ['13696', 'улица Жазылбека, 20, кв 96, 12 этаж', '5', '34.93 км', '8 мин', '14:19:27', '14:38:08'],
];

const GRID = 'grid grid-cols-[48px_56px_246.500px_251px_222px_223.500px_220.500px_224px_224px_1fr] items-center';

function Table() {
  return (
    <div className="bg-white text-[13.6px] leading-[19px] text-[#5a5e6b] shadow-[0_0_8px_rgba(100,105,150,0.25)] whitespace-nowrap">
      <div className={`${GRID} relative h-[64px] border-b border-[#d3d5e2] bg-[#f6f7fc] pb-[2px] text-[13.900px] font-medium text-[#4c505d]`}>
        <div className="text-center">ID</div>
        <div className="pl-1 text-[13.600px]">Статус</div>
        <div>Адрес погрузки</div>
        <div>Адрес доставки</div>
        <div>№ в маршруте</div>
        <div className="flex flex-col gap-[5px]">
          <span>Расстояние до точки</span>
          <div className="flex gap-2.5"><Total className="bg-[#700a9c]">119.47 км</Total><Total className="bg-[#1a91eb]">0.00 км</Total></div>
        </div>
        <div className="flex flex-col gap-[5px]">
          <span>Время в пути</span>
          <div className="flex gap-2.5"><Total className="bg-[#700a9c]">5.6 ч</Total><Total className="bg-[#1a91eb]">0 мин</Total></div>
        </div>
        <div>Время выезда</div>
        <div>Время завершения</div>
        <div className="flex flex-col items-start gap-[5px]">
          <span>Время простоя</span>
          <Total className="bg-[#18c480]">0 шт.</Total>
        </div>
        <svg className="absolute right-[6px] top-[7px] h-[14px] w-[14px]" viewBox="0 0 14 14" fill="#cfd1d8">
          <path d="M2.200 0h2.600v10H7l-3.500 4L0 10h2.200zM9.200 14h2.600V4H14l-3.500-4L7 4h2.200z" />
        </svg>
      </div>
      {rows.map(([id, address, num, dist, travel, leave, done]) => (
        <div key={id} className={`${GRID} h-[63px] border-b border-[#d3d5e2] pb-0.5`}>
          <div className="pl-[5px] text-[13.3px] font-semibold text-[#4d505d]">{id}</div>
          <div className="pl-[21.500px] pt-0.5"><span className="block size-[9px] rounded-full bg-[#7dc482]" /></div>
          <div>Нет адреса погрузки</div>
          <div className="whitespace-normal pr-5">{address}</div>
          <PlanFact plan={num} fact="~" />
          <PlanFact plan={dist} fact="0.00 км" stacked />
          <PlanFact plan={travel} fact="~" />
          <PlanFact plan={leave} fact="~" />
          <PlanFact plan={done} fact="~" />
          <PlanFact plan="10" fact="~" stacked />
        </div>
      ))}
    </div>
  );
}

export default function App() {
  return (
    <div className="flex h-[971px] w-[1917px] flex-col overflow-hidden bg-[#dcdfee] font-['Noto_Sans','Open_Sans',sans-serif]">
      <Header />
      <div className="h-4 shrink-0 bg-[#e8ecf5]" />
      <div className="flex min-h-0 flex-1">
        <main className="min-w-0 flex-1 overflow-hidden pl-[7px] pr-[11px]">
          <section className="shadow-[0_0_8px_rgba(100,105,150,0.25)]">
            <Filters />
            <div className="relative">
              <CityMap />
              <div className="absolute bottom-0 right-0 bg-white/75 px-[5px] font-['Liberation_Sans',sans-serif] text-[11.5px] leading-[17px] text-[#333]">
                <span className="text-[#0078a8]">Leaflet</span> | 2gis.ru
              </div>
            </div>
          </section>
          <div className="flex h-[61px] items-center justify-between pt-px">
            <div className="flex items-center gap-4 pl-4">
              <h1 className="pt-[2px] text-[18.1px] font-medium text-[#647291]">Список заявок водителя</h1>
              <span className="flex h-7 w-[45px] items-center justify-center rounded-full bg-[#fa981d] text-[16px] font-medium text-white">17</span>
            </div>
            <Legend />
          </div>
          <Table />
        </main>
        <div className="flex w-[17px] shrink-0 flex-col items-center bg-[#f1f1f1]">
          <svg className="mt-2 h-[5px] w-[9px]" viewBox="0 0 9 5"><path d="M0 5h9L4.500 0z" fill="#a3a3a3" /></svg>
          <div className="mt-1.5 h-[519px] w-[15px] bg-[#c1c1c1]" />
        </div>
      </div>
    </div>
  );
}
